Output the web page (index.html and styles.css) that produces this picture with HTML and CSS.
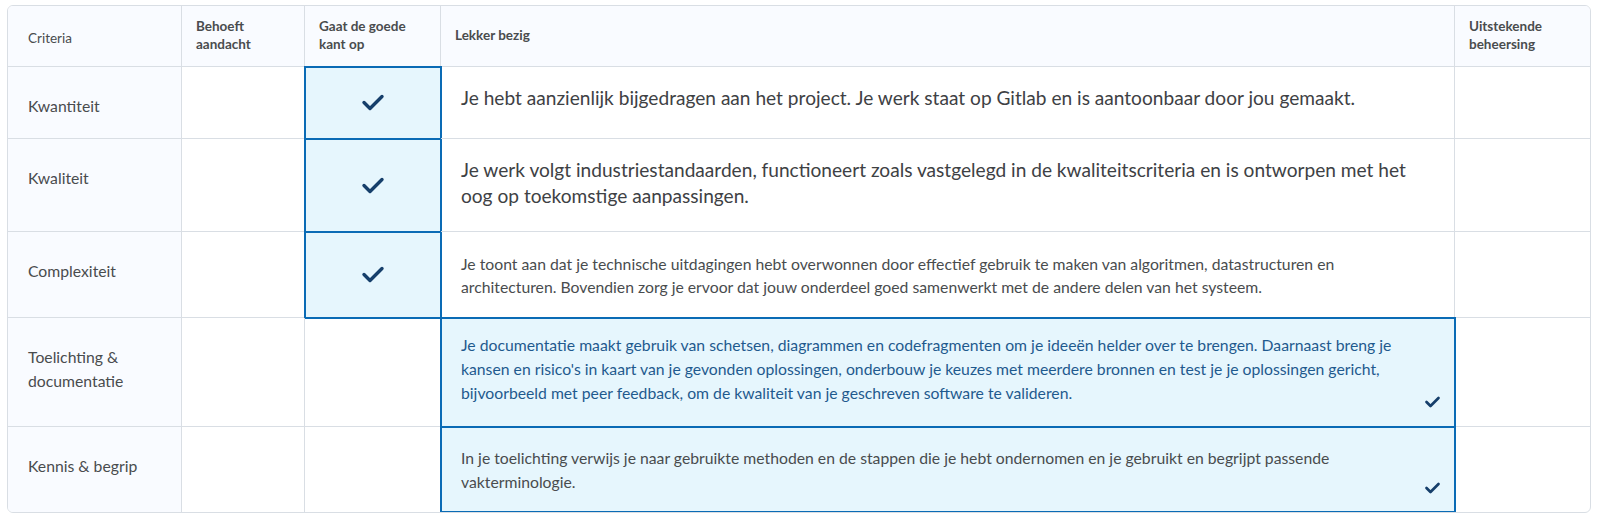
FILE: index.html
```html
<!DOCTYPE html>
<html>
<head>
    <title>Rubric</title>
    <meta charset="utf-8"/>
    <link rel="stylesheet" href="styles.css">
</head>
<body>

    <div class="rubric">
        <!-- header -->
        <div class="cell head head-first">Criteria</div>
        <div class="cell head">Behoeft aandacht</div>
        <div class="cell head">Gaat de goede kant op</div>
        <div class="cell head">Lekker bezig</div>
        <div class="cell head">Uitstekende beheersing</div>

        <!-- Kwantiteit -->
        <div class="cell crit">Kwantiteit</div>
        <div class="cell"></div>
        <div class="cell picked center">
            <svg class="check" width="24" height="19" viewBox="0 0 24 19"><path d="M3 9.5 L9 15.5 L21 3.5"/></svg>
        </div>
        <div class="cell desc big">Je hebt aanzienlijk bijgedragen aan het project. Je werk staat op Gitlab en is aantoonbaar door jou gemaakt.</div>
        <div class="cell"></div>

        <!-- Kwaliteit -->
        <div class="cell crit">Kwaliteit</div>
        <div class="cell"></div>
        <div class="cell picked center">
            <svg class="check" width="24" height="19" viewBox="0 0 24 19"><path d="M3 9.5 L9 15.5 L21 3.5"/></svg>
        </div>
        <div class="cell desc big">Je werk volgt industriestandaarden, functioneert zoals vastgelegd in de kwaliteitscriteria en is ontworpen met het oog op toekomstige aanpassingen.</div>
        <div class="cell"></div>

        <!-- Complexiteit -->
        <div class="cell crit">Complexiteit</div>
        <div class="cell"></div>
        <div class="cell picked center">
            <svg class="check" width="24" height="19" viewBox="0 0 24 19"><path d="M3 9.5 L9 15.5 L21 3.5"/></svg>
        </div>
        <div class="cell desc tight">Je toont aan dat je technische uitdagingen hebt overwonnen door effectief gebruik te maken van algoritmen, datastructuren en architecturen. Bovendien zorg je ervoor dat jouw onderdeel goed samenwerkt met de andere delen van het systeem.</div>
        <div class="cell"></div>

        <!-- Toelichting -->
        <div class="cell crit">Toelichting &amp;<br>documentatie</div>
        <div class="cell"></div>
        <div class="cell"></div>
        <div class="cell desc picked hover">Je documentatie maakt gebruik van schetsen, diagrammen en codefragmenten om je ideeën helder over te brengen. Daarnaast breng je kansen en risico's in kaart van je gevonden oplossingen, onderbouw je keuzes met meerdere bronnen en test je je oplossingen gericht, bijvoorbeeld met peer feedback, om de kwaliteit van je geschreven software te valideren.
            <svg class="check small" width="17" height="14" viewBox="0 0 17 14"><path d="M2.5 7 L6.5 11 L14.5 3"/></svg>
        </div>
        <div class="cell"></div>

        <!-- Kennis -->
        <div class="cell crit last">Kennis &amp; begrip</div>
        <div class="cell last"></div>
        <div class="cell last"></div>
        <div class="cell desc picked last">In je toelichting verwijs je naar gebruikte methoden en de stappen die je hebt ondernomen en je gebruikt en begrijpt passende vakterminologie.
            <svg class="check small" width="17" height="14" viewBox="0 0 17 14"><path d="M2.5 7 L6.5 11 L14.5 3"/></svg>
        </div>
        <div class="cell last"></div>
    </div>

</body>
</html>
```

FILE: styles.css
```css
body {
    margin: 0px;
    padding: 0px;
    background-color: #fff;
    font-family: Lato, "Open Sans", sans-serif;
    color: #494c4e;
}

.rubric {
    margin: 5px 9px 0px 7px;
    border: 1px solid #d9dee4;
    border-radius: 6px;
    overflow: hidden;
    display: grid;
    grid-template-columns: 174px 123px 136px 1fr 135px;
    grid-template-rows: 61px 72px 93px 86px 109px 85px;
}

.cell {
    border-right: 1px solid #d9dee4;
    border-bottom: 1px solid #d9dee4;
    display: flex;
    align-items: flex-start;
    padding: 0px 14px;
    font-size: 15.75px;
    line-height: 24px;
}
.cell:nth-child(5n) {border-right: 0px;}
.cell.last {border-bottom: 0px;}

.head {
    background-color: #f9fbff;
    align-items: center;
    font-size: 13.5px;
    font-weight: 700;
    line-height: 18px;
    padding-bottom: 3px;
}
.head.head-first {font-weight: 400; padding-left: 20px; padding-bottom: 0px; padding-top: 3px;}

.crit {
    background-color: #f9fbff;
    padding: 27px 14px 0px 20px;
}

.desc {
    padding: 19px 22px 0px 20px;
    position: relative;
}
.desc.tight {line-height: 23px; padding-top: 20px;}
.desc.big {
    font-size: 19.125px;
    line-height: 26px;
    padding-top: 18px;
    color: #3e4144;
}

.picked {
    background-color: #e6f6fd;
    outline: 2px solid #0a6bb5;
    outline-offset: -1px;
}
.picked.hover {color: #1f5a8e; padding-top: 15px;}

.center {justify-content: center; align-items: center; padding: 0px;}

.check path {
    fill: none;
    stroke: #163f6b;
    stroke-width: 3.4;
    stroke-linecap: round;
    stroke-linejoin: round;
}
.check.small {
    position: absolute;
    right: 13px;
    bottom: 17px;
}
.check.small path {stroke-width: 2.7;}
```
